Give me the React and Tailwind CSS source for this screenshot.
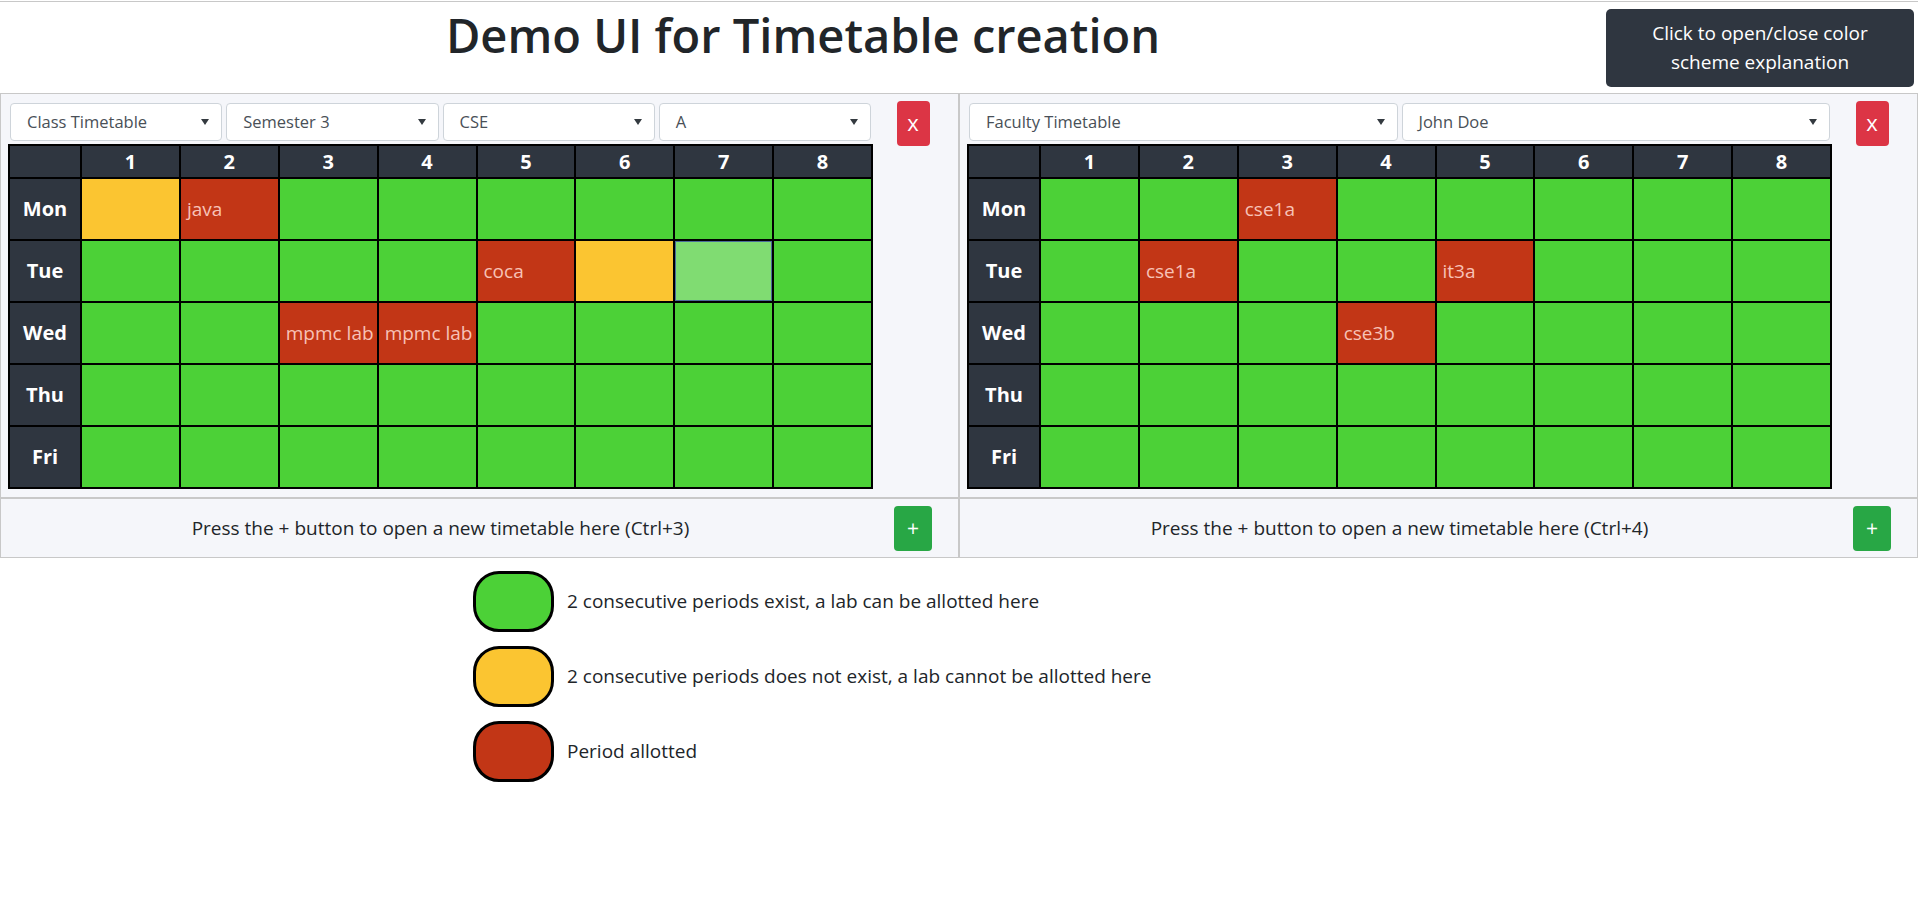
import React from "react";

const FONT = "font-['Open_Sans','Noto_Sans',sans-serif]";

const left = [
  ["Mon", ["y", "r:java", "g", "g", "g", "g", "g", "g"]],
  ["Tue", ["g", "g", "g", "g", "r:coca", "y", "h", "g"]],
  ["Wed", ["g", "g", "r:mpmc lab", "r:mpmc lab", "g", "g", "g", "g"]],
  ["Thu", ["g", "g", "g", "g", "g", "g", "g", "g"]],
  ["Fri", ["g", "g", "g", "g", "g", "g", "g", "g"]],
];

const right = [
  ["Mon", ["g", "g", "r:cse1a", "g", "g", "g", "g", "g"]],
  ["Tue", ["g", "r:cse1a", "g", "g", "r:it3a", "g", "g", "g"]],
  ["Wed", ["g", "g", "g", "r:cse3b", "g", "g", "g", "g"]],
  ["Thu", ["g", "g", "g", "g", "g", "g", "g", "g"]],
  ["Fri", ["g", "g", "g", "g", "g", "g", "g", "g"]],
];

function Cell({ v }) {
  if (v === "g") return <td className="border-2 border-black bg-[#4cd137]" />;
  if (v === "y") return <td className="border-2 border-black bg-[#fbc531]" />;
  if (v === "h")
    return (
      <td className="border-2 border-black bg-[#80dc72] shadow-[inset_0_0_0_1px_#4a6a9a]" />
    );
  const t = v.slice(2);
  return (
    <td className="border-2 border-black bg-[#c23616] pl-[6px] text-left text-[19px] text-[#f7c2b6] whitespace-nowrap">
      {t}
    </td>
  );
}

function Select({ label }) {
  return (
    <div className="m-[2px] flex h-[38px] flex-1 items-center justify-between rounded-[4px] border border-[#ced4da] bg-white pl-[16px] pr-[12px] text-[16.5px] text-[#495057]">
      <span>{label}</span>
      <svg width="8" height="6" viewBox="0 0 8 6">
        <path d="M0 0 L8 0 L4 6 Z" fill="#343a40" />
      </svg>
    </div>
  );
}

function Timetable({ selects, data }) {
  return (
    <div className="flex border border-[#c8c8c8] bg-[#f5f6fa] pl-[7px] pr-[5px] pt-[7px] pb-[8px]">
      <div className="flex flex-1 flex-col">
        <div className="flex">
          {selects.map((s) => (
            <Select key={s} label={s} />
          ))}
        </div>
        <table className="mt-px w-full table-fixed border-collapse">
          <colgroup>
            <col className="w-[72px]" />
            {[1, 2, 3, 4, 5, 6, 7, 8].map((n) => (
              <col key={n} />
            ))}
          </colgroup>
          <thead>
            <tr className="h-[33px] bg-[#2f3640] text-[20px] font-bold text-white">
              <th className="border-2 border-black" />
              {[1, 2, 3, 4, 5, 6, 7, 8].map((n) => (
                <th key={n} className="border-2 border-black text-center leading-none">
                  {n}
                </th>
              ))}
            </tr>
          </thead>
          <tbody>
            {data.map(([day, cells]) => (
              <tr key={day} className="h-[62px]">
                <td className="border-2 border-black bg-[#2f3640] text-center text-[20px] font-bold text-white">
                  {day}
                </td>
                {cells.map((c, i) => (
                  <Cell key={i} v={c} />
                ))}
              </tr>
            ))}
          </tbody>
        </table>
      </div>
      <div className="flex w-[80px] justify-center">
        <button className="h-[45px] w-[33px] rounded-[4px] bg-[#dc3545] pb-[3px] text-[22px] leading-none text-white">
          x
        </button>
      </div>
    </div>
  );
}

function Opener({ n }) {
  return (
    <div className="flex h-[60px] items-center border border-[#c8c8c8] bg-[#f5f6fa] pl-[7px] pr-[5px]">
      <div className="flex-1 text-center text-[19px] text-[#212529]">
        Press the + button to open a new timetable here (Ctrl+{n})
      </div>
      <div className="flex w-[80px] justify-center">
        <button className="h-[45px] w-[38px] rounded-[4px] bg-[#28a745] text-[21px] leading-none text-white">
          +
        </button>
      </div>
    </div>
  );
}

function Legend({ color, text }) {
  return (
    <div className="flex items-center gap-[13px]">
      <div className={`h-[61px] w-[81px] rounded-[26px] border-[3px] border-black ${color}`} />
      <span className="text-[19px] text-[#212529]">{text}</span>
    </div>
  );
}

export default function App() {
  return (
    <div className={`${FONT} min-h-[902px] bg-white text-[#212529]`}>
      <div className="mt-px h-px bg-[#c8c8c8]" />
      <div className="flex h-[91px] items-start">
        <h1 className="flex-1 pt-[1px] text-center text-[47px] font-semibold leading-[64px] text-[#212529]">
          Demo UI for Timetable creation
        </h1>
        <button className="mr-[4px] mt-[7px] h-[78px] w-[308px] rounded-[5px] bg-[#2f3640] px-[10px] text-[19px] leading-[29px] text-white">
          Click to open/close color
          <br />
          scheme explanation
        </button>
      </div>
      <div className="grid grid-cols-2">
        <Timetable
          selects={["Class Timetable", "Semester 3", "CSE", "A"]}
          data={left}
        />
        <Timetable selects={["Faculty Timetable", "John Doe"]} data={right} />
        <Opener n={3} />
        <Opener n={4} />
      </div>
      <div className="ml-[473px] mt-[13px] flex flex-col gap-[14px]">
        <Legend
          color="bg-[#4cd137]"
          text="2 consecutive periods exist, a lab can be allotted here"
        />
        <Legend
          color="bg-[#fbc531]"
          text="2 consecutive periods does not exist, a lab cannot be allotted here"
        />
        <Legend color="bg-[#c23616]" text="Period allotted" />
      </div>
    </div>
  );
}
